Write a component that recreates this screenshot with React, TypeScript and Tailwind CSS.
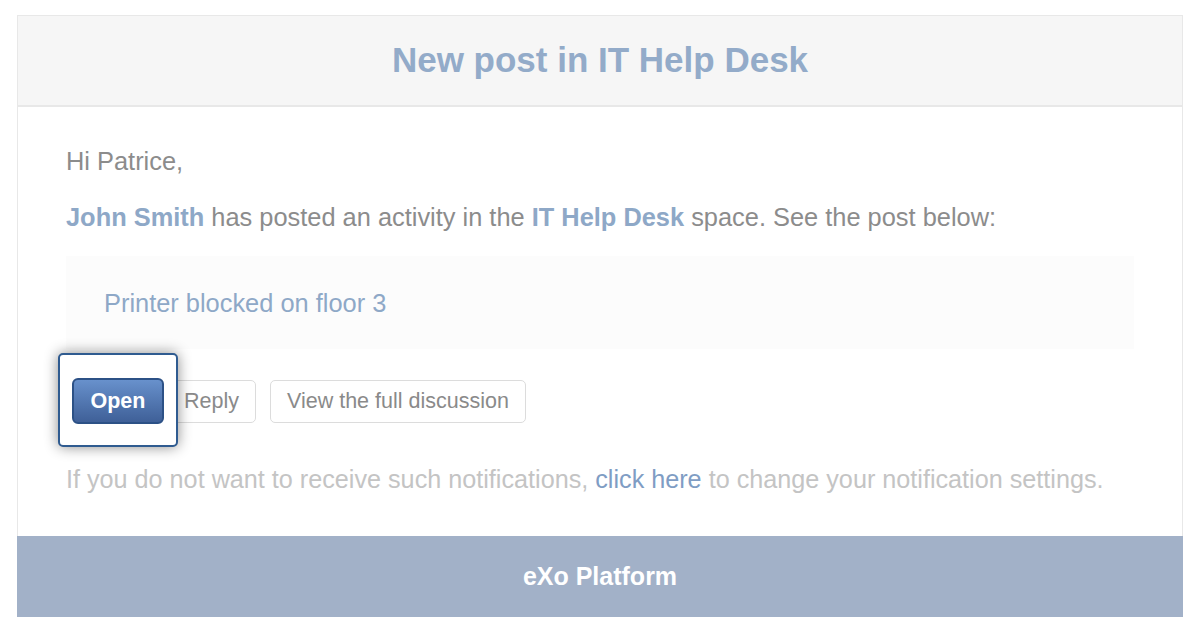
const font = { fontFamily: '"Liberation Sans", Arial, sans-serif' };

export default function App() {
  return (
    <div className="min-h-screen bg-white pt-[15px]" style={font}>
      <div className="mx-[17px] w-[1166px]">
        {/* Header */}
        <div className="h-[92px] border border-b-2 border-[#e8e8e8] bg-[#f6f6f6] flex items-center justify-center">
          <h1 className="text-[35px] font-bold text-[#93abc9] leading-none -mt-[2px]">
            New post in IT Help Desk
          </h1>
        </div>

        {/* Body */}
        <div className="border-x border-[#e8e8e8] px-[48px] pt-[39px] pb-[42px] text-[25.4px] text-[#8c8c8c] leading-[30px]">
          <p>Hi Patrice,</p>
          <p className="mt-[26px]">
            <span className="font-bold text-[#8ea8c7]">John Smith</span> has posted an activity in the{" "}
            <span className="font-bold text-[#8ea8c7]">IT Help Desk</span> space. See the post below:
          </p>

          <div className="mt-[24px] h-[93px] bg-[#fcfcfc] flex items-center px-[38px]">
            <span className="text-[#8ea8c7]">Printer blocked on floor 3</span>
          </div>

          <div className="mt-[29px] flex items-center">
            <div className="relative z-10 ml-[6px]">
              <div className="absolute -left-[14px] -right-[14px] -top-[25px] -bottom-[23px] rounded-[5px] border-2 border-[#2f5b90] bg-white shadow-[0_0_14px_rgba(0,0,0,0.45)]" />
              <button className="relative h-[46px] w-[92px] rounded-[6px] border-2 border-[#2c5186] bg-gradient-to-b from-[#6891cc] to-[#3f6098] text-[21.5px] font-bold text-white">
                Open
              </button>
            </div>
            <button className="ml-[3px] h-[43px] rounded-[5px] border border-[#dcdcdc] bg-white px-[16px] text-[21.5px] text-[#8a8a8a]">
              Reply
            </button>
            <button className="ml-[14px] h-[43px] rounded-[5px] border border-[#dcdcdc] bg-white px-[16px] text-[21.5px] text-[#8a8a8a]">
              View the full discussion
            </button>
          </div>

          <p className="mt-[40px] text-[25.2px] text-[#c4c4c4]">
            If you do not want to receive such notifications,{" "}
            <span className="text-[#7f9dc4]">click here</span> to change your notification settings.
          </p>
        </div>

        {/* Footer */}
        <div className="h-[81px] bg-[#a2b1c8] flex items-center justify-center">
          <span className="text-[25px] font-bold text-white">eXo Platform</span>
        </div>
      </div>
    </div>
  );
}
